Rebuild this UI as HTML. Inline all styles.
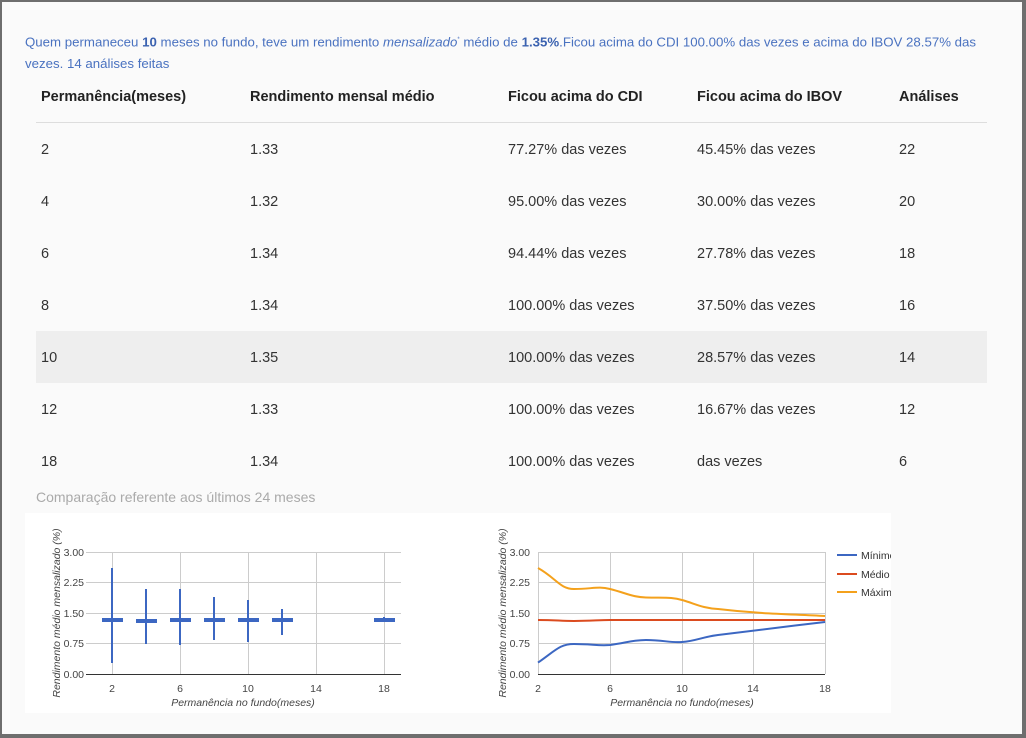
<!DOCTYPE html>
<html><head><meta charset="utf-8"><style>
html,body{margin:0;padding:0;}
body{width:1026px;height:738px;background:#6e6e6e;position:relative;overflow:hidden;font-family:"Liberation Sans",sans-serif;}
.dlg{position:absolute;left:2px;top:2px;width:1020px;height:732px;background:#fafafa;}
.intro{position:absolute;left:25px;top:29px;font-size:13.25px;color:#4a72c0;line-height:22px;white-space:nowrap;}
.intro b{color:#3b62b0}
.t{position:absolute;font-size:14.5px;color:#333;white-space:nowrap;}
.h{font-weight:bold;color:#222;}
.hl{position:absolute;left:36px;top:122px;width:951px;height:1px;background:#ddd;}
.row{position:absolute;left:36px;top:331px;width:951px;height:52px;background:#eeeeee;}
.cmp{position:absolute;left:36px;top:489px;font-size:14px;color:#aaa;}
svg{position:absolute;top:0;left:0;}
</style></head><body>
<div class="dlg"></div>
<div class="intro">Quem permaneceu <b>10</b> meses no fundo, teve um rendimento <i>mensalizado</i><sup style="font-size:6px">*</sup> médio de <b>1.35%</b>.Ficou acima do CDI 100.00% das vezes e acima do IBOV 28.57% das<br>vezes. 14 análises feitas</div>
<div class="row"></div>
<div class="hl"></div>
<div class="t h" style="left:41px;top:89px">Permanência(meses)</div>
<div class="t h" style="left:250px;top:89px">Rendimento mensal médio</div>
<div class="t h" style="left:508px;top:89px">Ficou acima do CDI</div>
<div class="t h" style="left:697px;top:89px">Ficou acima do IBOV</div>
<div class="t h" style="left:899px;top:89px">Análises</div>

<div class="t" style="left:41px;top:142px">2</div><div class="t" style="left:250px;top:142px">1.33</div><div class="t" style="left:508px;top:142px">77.27% das vezes</div><div class="t" style="left:697px;top:142px">45.45% das vezes</div><div class="t" style="left:899px;top:142px">22</div>
<div class="t" style="left:41px;top:194px">4</div><div class="t" style="left:250px;top:194px">1.32</div><div class="t" style="left:508px;top:194px">95.00% das vezes</div><div class="t" style="left:697px;top:194px">30.00% das vezes</div><div class="t" style="left:899px;top:194px">20</div>
<div class="t" style="left:41px;top:246px">6</div><div class="t" style="left:250px;top:246px">1.34</div><div class="t" style="left:508px;top:246px">94.44% das vezes</div><div class="t" style="left:697px;top:246px">27.78% das vezes</div><div class="t" style="left:899px;top:246px">18</div>
<div class="t" style="left:41px;top:298px">8</div><div class="t" style="left:250px;top:298px">1.34</div><div class="t" style="left:508px;top:298px">100.00% das vezes</div><div class="t" style="left:697px;top:298px">37.50% das vezes</div><div class="t" style="left:899px;top:298px">16</div>
<div class="t" style="left:41px;top:350px">10</div><div class="t" style="left:250px;top:350px">1.35</div><div class="t" style="left:508px;top:350px">100.00% das vezes</div><div class="t" style="left:697px;top:350px">28.57% das vezes</div><div class="t" style="left:899px;top:350px">14</div>
<div class="t" style="left:41px;top:402px">12</div><div class="t" style="left:250px;top:402px">1.33</div><div class="t" style="left:508px;top:402px">100.00% das vezes</div><div class="t" style="left:697px;top:402px">16.67% das vezes</div><div class="t" style="left:899px;top:402px">12</div>
<div class="t" style="left:41px;top:454px">18</div><div class="t" style="left:250px;top:454px">1.34</div><div class="t" style="left:508px;top:454px">100.00% das vezes</div><div class="t" style="left:697px;top:454px">das vezes</div><div class="t" style="left:899px;top:454px">6</div>
<div class="cmp">Comparação referente aos últimos 24 meses</div>

<svg width="1026" height="738" font-family="Liberation Sans, sans-serif">
<rect x="25" y="513" width="445" height="200" fill="#fff"/>
<rect x="470" y="513" width="421" height="200" fill="#fff"/>
<g stroke="#ccc" stroke-width="1">
<line x1="86" y1="552.5" x2="401" y2="552.5"/><line x1="86" y1="582.5" x2="401" y2="582.5"/><line x1="86" y1="613.5" x2="401" y2="613.5"/><line x1="86" y1="643.5" x2="401" y2="643.5"/>
<line x1="112.5" y1="552" x2="112.5" y2="674"/><line x1="180.5" y1="552" x2="180.5" y2="674"/><line x1="248.5" y1="552" x2="248.5" y2="674"/><line x1="316.5" y1="552" x2="316.5" y2="674"/><line x1="384.5" y1="552" x2="384.5" y2="674"/>
<line x1="538" y1="552.5" x2="825" y2="552.5"/><line x1="538" y1="582.5" x2="825" y2="582.5"/><line x1="538" y1="613.5" x2="825" y2="613.5"/><line x1="538" y1="643.5" x2="825" y2="643.5"/>
<line x1="538.5" y1="552" x2="538.5" y2="674"/><line x1="610.5" y1="552" x2="610.5" y2="674"/><line x1="682.5" y1="552" x2="682.5" y2="674"/><line x1="753.5" y1="552" x2="753.5" y2="674"/><line x1="825.5" y1="552" x2="825.5" y2="674"/>
</g>
<line x1="86" y1="674.5" x2="401" y2="674.5" stroke="#333"/>
<line x1="538" y1="674.5" x2="825" y2="674.5" stroke="#333"/>
<g fill="#444" font-size="10.5" text-anchor="end">
<text x="84" y="556">3.00</text><text x="84" y="586">2.25</text><text x="84" y="617">1.50</text><text x="84" y="647">0.75</text><text x="84" y="678">0.00</text>
<text x="530" y="556">3.00</text><text x="530" y="586">2.25</text><text x="530" y="617">1.50</text><text x="530" y="647">0.75</text><text x="530" y="678">0.00</text>
</g>
<g fill="#444" font-size="10.5" text-anchor="middle">
<text x="112" y="692">2</text><text x="180" y="692">6</text><text x="248" y="692">10</text><text x="316" y="692">14</text><text x="384" y="692">18</text>
<text x="538" y="692">2</text><text x="610" y="692">6</text><text x="682" y="692">10</text><text x="753" y="692">14</text><text x="825" y="692">18</text>
<text x="243" y="706" font-style="italic">Permanência no fundo(meses)</text>
<text x="682" y="706" font-style="italic">Permanência no fundo(meses)</text>
<text transform="translate(60,613) rotate(-90)" font-style="italic">Rendimento médio mensalizado (%)</text>
<text transform="translate(506,613) rotate(-90)" font-style="italic">Rendimento médio mensalizado (%)</text>
</g>
<g stroke="#3c67c2">
<g stroke-width="2">
<line x1="112" y1="568" x2="112" y2="663"/><line x1="146" y1="589" x2="146" y2="644"/><line x1="180" y1="589" x2="180" y2="645"/><line x1="214" y1="597" x2="214" y2="640"/><line x1="248" y1="600" x2="248" y2="642"/><line x1="282" y1="609" x2="282" y2="635"/><line x1="384" y1="617" x2="384" y2="622"/>
</g>
<g stroke-width="4">
<line x1="102" y1="620" x2="123" y2="620"/><line x1="136" y1="621" x2="157" y2="621"/><line x1="170" y1="620" x2="191" y2="620"/><line x1="204" y1="620" x2="225" y2="620"/><line x1="238" y1="620" x2="259" y2="620"/><line x1="272" y1="620" x2="293" y2="620"/><line x1="374" y1="620" x2="395" y2="620"/>
</g>
</g>
<g fill="none" stroke-width="2">
<path stroke="#f4a11c" d="M538 568 C556 578,560 589,574 589 C592 589,598 586,610 589 C626 593,632 597,646 597.5 C664 598,672 597,682 600 C696 604,702 608,718 609 C760 614,790 614,825 616"/>
<path stroke="#db4b1f" d="M538 620 C556 620,560 621,574 621 C592 621,598 620,610 620 L825 620"/>
<path stroke="#3c67c2" d="M538 662.6 C556 650,560 644,574 644 C592 644,598 646,610 645 C626 643,632 640,646 640 C664 640,670 643,682 642 C696 641,702 637,718 635 C760 630,790 626,825 622"/>
<line x1="837" y1="555" x2="857" y2="555" stroke="#3c67c2"/>
<line x1="837" y1="574" x2="857" y2="574" stroke="#db4b1f"/>
<line x1="837" y1="592" x2="857" y2="592" stroke="#f4a11c"/>
</g>
<svg x="860" y="540" width="31" height="60"><g font-size="10.5" fill="#333"><text x="1" y="19">Mínimo</text><text x="1" y="38">Médio</text><text x="1" y="56">Máximo</text></g></svg>
</svg>
</body></html>
